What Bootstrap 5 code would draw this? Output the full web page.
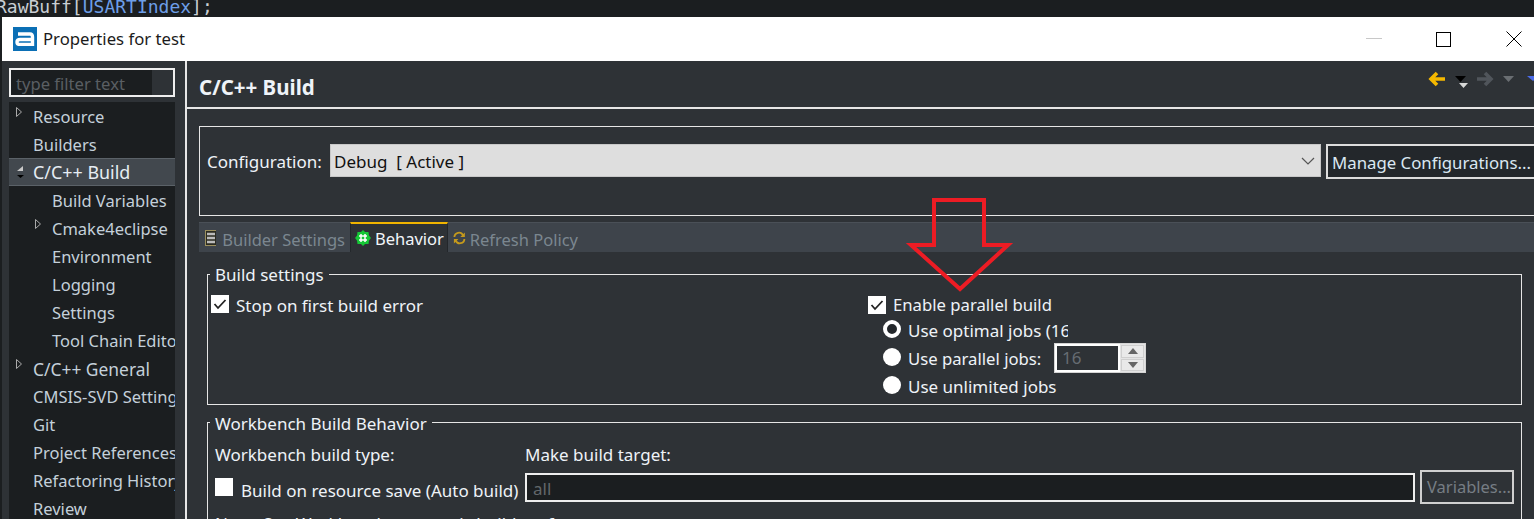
<!DOCTYPE html>
<html lang="en">
<head>
<meta charset="utf-8">
<title>Properties for test</title>
<link href="https://cdn.jsdelivr.net/npm/bootstrap@5.3.0/dist/css/bootstrap.min.css" rel="stylesheet">
<style>
html,body{height:519px;overflow:hidden;}
body{background:#1b1e20;font-family:"Noto Sans","Open Sans",sans-serif;font-size:17px;line-height:24px;color:#eef3f8;position:relative;}
.code-strip{height:17px;font:18px/14px "DejaVu Sans Mono",monospace;margin-left:-4px;color:#c9ced3;white-space:nowrap;overflow:hidden;}
.code-strip b{font-weight:400;color:#6d9fe8;}
.win{margin-left:2px;height:502px;overflow:hidden;background:#2e3236;}
.titlebar{height:44px;background:#fff;color:#1b1b1b;padding-left:11px;}
.logo{width:24px;height:24px;background:#0b6fb5;flex:none;}
.ttl{margin-left:6px;font-size:16.7px;}
.wctl{padding-right:12px;gap:55px;}
.wbtn{width:16px;height:44px;}
.wmin{margin-right:-2px;}
.side{width:185px;flex:none;padding:7px 0 0 7px;border-right:2px solid #e6e6e6;height:458px;overflow:hidden;}
.filter{width:166px;height:29px;border:2px solid #eee;background:#1b1e20;color:#5a5f63;padding-left:5px;line-height:27px;font-size:16.6px;position:relative;white-space:nowrap;overflow:hidden;}
.filter-end{position:absolute;right:0;top:0;bottom:0;width:21px;background:#2e3236;}
.tree{width:166px;margin-top:5px;background:#1b1e20;height:417px;overflow:hidden;color:#c4d0da;font-size:16.5px;}
.node{height:28px;line-height:30px;padding-left:24px;white-space:nowrap;overflow:hidden;position:relative;}
.node.sub{padding-left:43px;}
.node.sel{background:#42484e;border-top:1px solid #5b6268;border-bottom:1px solid #5b6268;color:#e6edf3;line-height:26px;font-size:17.9px;}
.wide{font-size:17.4px;}
.twist{position:absolute;left:6px;top:4px;}
.node.sub .twist{left:25px;}
.main{flex:1;min-width:0;}
.head{height:48px;border-bottom:2px solid #e6e6e6;padding-left:12px;font-weight:700;font-size:20.5px;position:relative;line-height:52px;}
.tools{position:absolute;left:1240px;top:8px;}
.pane{padding:17px 0 0 12px;width:1400px;}
.cfg{height:90px;border:1px solid #e6e6e6;padding:17px 0 0 7px;width:1400px;}
.cfg-l{line-height:36px;width:115px;white-space:nowrap;}
.sel-box{width:991px;height:33px;margin-left:8px;background:#dedede;color:#111;padding:1px 5px 0 3px;border:1px solid #c8c8c8;line-height:31px;}
.mbtn{height:35px;width:240px;margin-left:5px;border:2px solid #ddd;background:#23272b;padding-left:4px;line-height:33px;font-size:16.8px;white-space:nowrap;color:#dbe7f2;}
.tabbar{margin-top:6px;height:30px;background:#3e444b;border-top:1px solid #4a5057;width:1340px;font-size:16.5px;}
.tabx{line-height:24px;color:#7b8790;white-space:nowrap;height:29px;}
.tabx span{padding-top:4px;}
.tab-1{padding:0 5px 0 6px;width:151px;gap:6px;}
.tab-3{padding:0 2px 0 5px;width:132px;gap:4px;}
.tabx.cur{background:#2e3236;color:#f2f6fa;border-top:2px solid #f0b400;margin-top:-1px;height:30px;width:98px;padding:0 0 0 4px;gap:4px;border-right:1px solid #23272b;border-left:1px solid #23272b;}
.tabx.cur span{padding-top:2px;}
.gbox{border:1px solid #e6e6e6;position:relative;margin-left:8px;width:1315px;}
.gbox-t{height:131px;margin-top:22px;}
.gbox-b{height:200px;margin-top:17px;padding:20px 0 0 7px;}
.gleg{position:absolute;left:2px;top:-12px;padding:0 5px;background:#2e3236;line-height:24px;}
.gbox-b .gleg{top:-11px;}
.chk{width:18px;height:18px;background:#fff;flex:none;display:flex;align-items:center;justify-content:center;}
.chk-up{margin-bottom:4px;}
.radio{width:18px;height:18px;border-radius:50%;background:#fff;flex:none;margin-bottom:4px;}
.radio.on{border:4px solid #fff;background:#23272b;}
.col-l{width:660px;padding:19px 0 0 3px;}
.col-r{padding-top:18px;}
.en-row{height:24px;font-size:16.7px;}
.lbl{margin-left:7px;white-space:nowrap;}
.rad-row{height:28px;padding-left:15px;}
.clipper{width:160px;overflow:hidden;white-space:nowrap;}
.plbl{width:132px;font-size:16.7px;}
.spin{margin:0 0 2px 14px;width:92px;height:30px;border:1px solid #d5d5d5;background:#e4e4e4;}
.spin-in{width:65px;height:28px;border:2px solid #fff;background:#2e3236;color:#666c72;padding-left:5px;line-height:24px;}
.spin-b{flex:1;display:flex;flex-direction:column;gap:1px;padding:1px;}
.spin-b span{flex:1;background:#e9e9e9;border:1px solid #cfcfcf;display:flex;align-items:center;justify-content:center;}
.wb-labels{height:24px;}
.wb-l1{width:310px;}
.auto-row{margin-top:3px;height:34px;}
.auto-lbl{margin-left:8px;width:284px;padding-top:8px;}
.tgt{width:890px;height:29px;border:2px solid #eee;background:#1b1e20;color:#62676b;padding-left:6px;line-height:27px;}
.vbtn{width:94px;height:34px;margin-left:5px;border:2px solid #cfcfcf;background:#2e3236;color:#767d84;padding-left:5px;line-height:30px;white-space:nowrap;font-size:16.5px;}
.note{margin-top:8px;}
.redarrow{position:absolute;left:900px;top:190px;pointer-events:none;}
</style>
</head>
<body>
<div class="code-strip">RawBuff[<b>USARTIndex</b>];</div>
<div class="win">
  <div class="titlebar d-flex align-items-center">
    <span class="logo d-flex align-items-center justify-content-center">
      <svg width="20" height="14" viewBox="0 0 20 14"><path d="M3 2H15Q17.500 2 17.500 5V12.500H5Q2 12.500 2 10Q2 7.500 5 7.500H17" fill="none" stroke="#fff" stroke-width="3.400"/></svg>
    </span>
    <span class="ttl">Properties for test</span>
    <span class="ms-auto d-flex wctl">
      <span class="wbtn wmin d-flex align-items-center justify-content-center"><svg width="16" height="2"><rect width="16" height="1" fill="#c8c8c8"/></svg></span>
      <span class="wbtn d-flex align-items-center justify-content-center"><svg width="15" height="15"><rect x=".5" y=".5" width="14" height="14" fill="none" stroke="#000"/></svg></span>
      <span class="wbtn d-flex align-items-center justify-content-center"><svg width="16" height="16"><path d="M.5.5l15 15M15.500.5l-15 15" stroke="#000" fill="none"/></svg></span>
    </span>
  </div>
  <div class="d-flex">
    <div class="side">
      <div class="filter">type filter text<span class="filter-end"></span></div>
      <div class="tree">
        <div class="node"><svg class="twist" width="9" height="16"><path d="M1.500 1.500l5 4.500-5 4.500z" fill="none" stroke="#aaa"/></svg>Resource</div>
        <div class="node">Builders</div>
        <div class="node sel"><svg class="twist" width="10" height="18"><path d="M8 3v5H2z" fill="#c9c9c9"/><path d="M2 12h7l-3.500 3z" fill="#000"/></svg>C/C++ Build</div>
        <div class="node sub">Build Variables</div>
        <div class="node sub"><svg class="twist" width="9" height="16"><path d="M1.500 1.500l5 4.500-5 4.500z" fill="none" stroke="#aaa"/></svg>Cmake4eclipse</div>
        <div class="node sub">Environment</div>
        <div class="node sub">Logging</div>
        <div class="node sub">Settings</div>
        <div class="node sub">Tool Chain Editor</div>
        <div class="node wide"><svg class="twist" width="9" height="16"><path d="M1.500 1.500l5 4.500-5 4.500z" fill="none" stroke="#aaa"/></svg>C/C++ General</div>
        <div class="node">CMSIS-SVD Settings</div>
        <div class="node">Git</div>
        <div class="node">Project References</div>
        <div class="node">Refactoring History</div>
        <div class="node">Review</div>
      </div>
    </div>
    <div class="main">
      <div class="head">C/C++ Build
        <svg class="tools" width="115" height="22" viewBox="0 0 115 22">
          <path d="M10 4L4 10l6 6M4 10H18" fill="none" stroke="#f5b800" stroke-width="3.600"/>
          <path d="M28 7H39L33.500 13z" fill="#000"/><path d="M32 14H41L36.500 19z" fill="#d8d8d8"/>
          <path d="M58 4l6 6-6 6M64 10H50" fill="none" stroke="#50555b" stroke-width="3.600"/>
          <path d="M76 7H87L81.500 13z" fill="#6a6e72"/>
          <path d="M100 7H112L106 12z" fill="#4a6be8"/>
        </svg>
      </div>
      <div class="pane">
        <div class="cfg d-flex align-items-start">
          <span class="cfg-l">Configuration:</span>
          <div class="sel-box d-flex justify-content-between align-items-center">
            <span>Debug&nbsp; [ Active ]</span>
            <svg width="14" height="8"><path d="M1 1l6 6 6-6" fill="none" stroke="#555" stroke-width="1.200"/></svg>
          </div>
          <div class="mbtn">Manage Configurations...</div>
        </div>
        <div class="tabbar d-flex">
          <div class="tabx tab-1 d-flex align-items-center">
            <svg width="12" height="16"><rect x=".5" y=".5" width="11" height="15" fill="#2b2b20" stroke="#9b8f5e"/><path d="M2 4h8M2 8h8M2 12h8" stroke="#bbb" stroke-width="2.500"/></svg>
            <span>Builder Settings</span>
          </div>
          <div class="tabx cur d-flex align-items-center">
            <svg width="16" height="16" viewBox="0 0 16 16"><path d="M8 0l2 2h3.500L14 5.500 16 8l-2 2.500-.5 3.500H10l-2 2-2-2H2.500L2 10.500 0 8l2-2.500L2.500 2H6z" fill="#16c736"/><path d="M6 4v8M10 4v8M4 6h8M4 10h8" stroke="#fff" stroke-width="1.500"/></svg>
            <span>Behavior</span>
          </div>
          <div class="tabx tab-3 d-flex align-items-center">
            <svg width="14" height="14" viewBox="0 0 14 14"><path d="M1.500 6A5 5 0 0 1 11 4M12.500 8A5 5 0 0 1 3 10" fill="none" stroke="#c59a1c" stroke-width="2"/><path d="M13 1v5H8zM1 13V8h5z" fill="#c59a1c"/></svg>
            <span>Refresh Policy</span>
          </div>
        </div>
        <div class="gbox gbox-t d-flex">
          <span class="gleg">Build settings</span>
          <div class="col-l">
            <div class="d-flex align-items-center">
              <span class="chk chk-up"><svg width="14" height="12"><path d="M1.500 6l3.500 4 7.500-8" fill="none" stroke="#222" stroke-width="1.800"/></svg></span>
              <span class="lbl">Stop on first build error</span>
            </div>
          </div>
          <div class="col-r">
            <div class="en-row d-flex align-items-center">
              <span class="chk"><svg width="14" height="12"><path d="M1.500 6l3.500 4 7.500-8" fill="none" stroke="#222" stroke-width="1.800"/></svg></span>
              <span class="lbl">Enable parallel build</span>
            </div>
            <div class="rad-row d-flex align-items-center"><span class="radio on"></span><span class="lbl clipper">Use optimal jobs (16)</span></div>
            <div class="rad-row d-flex align-items-center"><span class="radio"></span><span class="lbl plbl">Use parallel jobs:</span>
              <div class="spin d-flex"><div class="spin-in">16</div><div class="spin-b"><span><svg width="10" height="6"><path d="M5 0l5 6H0z" fill="#666"/></svg></span><span><svg width="10" height="6"><path d="M5 6l5-6H0z" fill="#666"/></svg></span></div></div>
            </div>
            <div class="rad-row d-flex align-items-center"><span class="radio"></span><span class="lbl">Use unlimited jobs</span></div>
          </div>
        </div>
        <div class="gbox gbox-b">
          <span class="gleg">Workbench Build Behavior</span>
          <div class="wb-labels d-flex"><span class="wb-l1">Workbench build type:</span><span>Make build target:</span></div>
          <div class="auto-row d-flex align-items-center">
            <span class="chk"></span><span class="auto-lbl text-nowrap">Build on resource save (Auto build)</span>
            <div class="tgt">all</div>
            <div class="vbtn">Variables...</div>
          </div>
          <div class="note">Note: See Workbench automatic build preference</div>
        </div>
      </div>
    </div>
  </div>
</div>
<svg class="redarrow" width="120" height="110" viewBox="900 190 120 110"><path d="M934 200H984V245H1008L960 289 911 245H934Z" fill="none" stroke="#ed1c24" stroke-width="4"/></svg>
<script src="https://cdn.jsdelivr.net/npm/bootstrap@5.3.0/dist/js/bootstrap.bundle.min.js"></script>
</body>
</html>
